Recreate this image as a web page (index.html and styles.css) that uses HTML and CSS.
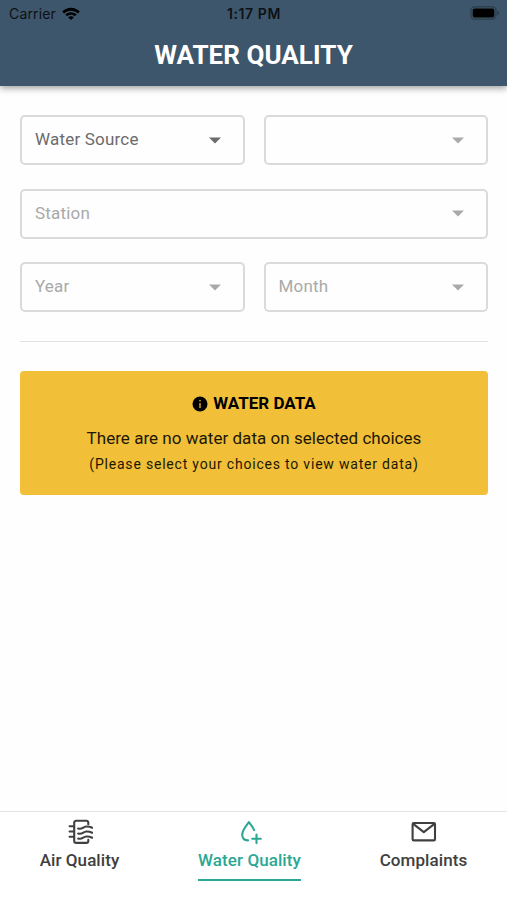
FILE: index.html
```
<!DOCTYPE html>
<html lang="en">

<head>
	<meta charset="utf-8">
	<title>Water Quality</title>
	<meta name="viewport" content="width=device-width, initial-scale=1">
	<link rel="stylesheet" href="styles.css">
</head>

<body>
	<header class="header">
		<div class="statusbar">
			<div class="carrier">
				<span>Carrier</span>
				<svg class="wifi" viewBox="0 0 18 13">
					<path d="M0.2 4.5C5-.6 13-.6 17.8 4.5L15.8 6.4C12 2.7 6 2.7 2.2 6.4Z" />
					<path d="M3.3 7.5C6.6 4.4 11.4 4.4 14.7 7.5L12.8 9.3C10.6 7.3 7.4 7.3 5.2 9.3Z" />
					<path d="M6.1 10.2C7.9 8.8 10.1 8.8 11.9 10.2L9 13Z" />
				</svg>
			</div>
			<span class="clock">1:17 PM</span>
			<svg class="battery" viewBox="0 0 30 14">
				<rect class="battery-case" x="1" y="0.8" width="25" height="12.4" rx="3.6" />
				<rect x="2.7" y="2.4" width="21.6" height="9.2" rx="2" />
				<path class="battery-tip" d="M27.4 4.8q1.8 .8 1.8 2.2t-1.8 2.2z" />
			</svg>
		</div>
		<h1 class="title">WATER QUALITY</h1>
	</header>

	<main class="content">
		<!--FILTERS-->
		<div class="filters">
			<div class="select active">
				<span>Water Source</span>
				<svg class="caret" viewBox="0 0 12 7"><path d="M0 0.4h12L6 6.6z" /></svg>
			</div>
			<div class="select">
				<span></span>
				<svg class="caret" viewBox="0 0 12 7"><path d="M0 0.4h12L6 6.6z" /></svg>
			</div>
			<div class="select wide">
				<span>Station</span>
				<svg class="caret" viewBox="0 0 12 7"><path d="M0 0.4h12L6 6.6z" /></svg>
			</div>
			<div class="select">
				<span>Year</span>
				<svg class="caret" viewBox="0 0 12 7"><path d="M0 0.4h12L6 6.6z" /></svg>
			</div>
			<div class="select">
				<span>Month</span>
				<svg class="caret" viewBox="0 0 12 7"><path d="M0 0.4h12L6 6.6z" /></svg>
			</div>
		</div>

		<hr class="divider">

		<!--EMPTY STATE-->
		<section class="notice">
			<h2 class="notice-title">
				<svg class="info" viewBox="0 0 16 16">
					<circle cx="8" cy="8" r="7.5" />
					<path d="M8 3.9v1.7M8 7.1v4.8" />
				</svg>
				<span>WATER DATA</span>
			</h2>
			<p class="notice-text">There are no water data on selected choices</p>
			<p class="notice-hint">(Please select your choices to view water data)</p>
		</section>
	</main>

	<!--BOTTOM TABS-->
	<nav class="tabs">
		<a class="tab">
			<svg class="tab-icon" viewBox="0 0 26 26">
				<path d="M21.3 5.2V3.7a2 2 0 0 0-2-2H9.2a2 2 0 0 0-2 2v18.2a2 2 0 0 0 2 2h10.1a2 2 0 0 0 2-2v-1.2" />
				<path d="M2.6 7.2h4M2.6 12.5h4M2.6 17.8h4" />
				<path d="M11.2 9.6c4.3 1.2 4.9-1.9 8.1-2.1 2.2-.1 4 .3 5.9 1.2M11.2 14.6c4.3 1.2 4.9-1.9 8.1-2.1 2.2-.1 4 .3 5.9 1.2M11.2 19.6c4.3 1.2 4.9-1.9 8.1-2.1 2.2-.1 4 .3 5.9 1.2" />
			</svg>
			<span class="tab-label">Air Quality</span>
		</a>
		<a class="tab selected">
			<svg class="tab-icon" viewBox="0 0 26 26">
				<path d="M18.2 11.1C16.9 8.3 15.1 5.8 12.9 3.1 9.2 7.8 6.2 12 6.2 15.4c0 3.4 2.2 5.7 5.8 6" />
				<path d="M20.5 15.5v8.6M16.2 19.8h8.6" />
			</svg>
			<span class="tab-label">Water Quality</span>
		</a>
		<a class="tab">
			<svg class="tab-icon" viewBox="0 0 26 26">
				<rect x="1.6" y="4" width="22.4" height="17.4" rx="1.2" />
				<path d="M2.2 4.8l10.6 8.3L23.4 4.8" />
			</svg>
			<span class="tab-label">Complaints</span>
		</a>
	</nav>
</body>

</html>
```
FILE: styles.css
```
* {
	box-sizing: border-box;
}

body {
	margin: 0;
	height: 100vh;
	display: flex;
	flex-direction: column;
	background-color: #fefefe;
	font-family: Roboto, sans-serif;
	overflow: hidden;
}

svg {
	display: block;
}

.header {
	height: 86px;
	background-color: #3e566b;
	box-shadow: 0 2px 7px rgba(0, 0, 0, 0.4);
}

.statusbar {
	height: 27px;
	padding: 0 7px 0 9px;
	display: grid;
	grid-template-columns: 1fr auto 1fr;
	align-items: center;
	font-family: Inter, sans-serif;
	font-size: 14px;
	color: #0b1116;
}

.carrier {
	display: flex;
	align-items: center;
	gap: 6px;
	letter-spacing: 0.15px;
}

.wifi {
	width: 18px;
	height: 13px;
	margin-top: -1px;
	fill: #000;
}

.clock {
	font-weight: 600;
	padding-right: 1px;
	letter-spacing: 0.6px;
}

.battery {
	width: 30px;
	height: 14px;
	margin-top: -1px;
	justify-self: end;
}

.battery-case {
	fill: none;
	stroke: #2b3c4b;
	stroke-width: 1.2;
}

.battery-tip {
	fill: #2b3c4b;
}

.title {
	margin: 0;
	font-size: 26px;
	line-height: 56px;
	font-weight: 700;
	letter-spacing: 0.05px;
	text-align: center;
	color: #fff;
}

.content {
	flex: 1;
	padding: 29px 19px 0 20px;
}

.filters {
	display: grid;
	grid-template-columns: 1fr 1fr;
	grid-auto-rows: 50px;
	gap: 23.5px 19px;
}

.select {
	display: flex;
	align-items: center;
	justify-content: space-between;
	padding: 0 22px 2px 13px;
	border: 2px solid #dadada;
	border-radius: 5px;
	font-size: 17px;
	letter-spacing: 0.2px;
	color: #a9a9a9;
}

.select.active {
	color: #6b6b6b;
}

.wide {
	grid-column: span 2;
}

.caret {
	width: 12px;
	height: 7px;
	margin-top: 2px;
	fill: currentColor;
}

.divider {
	height: 1px;
	margin: 29px 0;
	border: 0;
	background-color: #e2e2e2;
}

.notice {
	height: 124px;
	padding-top: 21px;
	border-radius: 4px;
	background-color: #f1bf38;
	text-align: center;
	color: #1d1704;
}

.notice-title {
	display: flex;
	align-items: center;
	justify-content: center;
	gap: 5px;
	margin: 0;
	font-size: 17px;
	line-height: 22px;
	color: #000;
}

.info {
	width: 16px;
	height: 16px;
	margin-top: 2px;
}

.info path {
	stroke: #c09a2f;
	stroke-width: 1.6;
}

.notice-text {
	margin: 12px 0 0;
	font-size: 17px;
	line-height: 24px;
	letter-spacing: 0.03px;
}

.notice-hint {
	margin: 3px 0 0;
	font-size: 14px;
	line-height: 22px;
	letter-spacing: 0.8px;
}

.tabs {
	height: 89px;
	padding-top: 7px;
	display: grid;
	grid-template-columns: 159px 181px 167px;
	justify-items: center;
	align-items: start;
	border-top: 1px solid #e4e4e4;
	background-color: #fff;
}

.tab {
	display: flex;
	flex-direction: column;
	align-items: center;
	color: #404040;
}

.tab-icon {
	width: 26px;
	height: 26px;
	fill: none;
	stroke: currentColor;
	stroke-width: 2.1;
	stroke-linecap: round;
	stroke-linejoin: round;
}

.tab-label {
	height: 36px;
	font-size: 17px;
	line-height: 31px;
	font-weight: 500;
	letter-spacing: 0.08px;
}

.selected {
	color: #2ba795;
}

.selected .tab-label {
	border-bottom: 2px solid #2ba795;
}
```
